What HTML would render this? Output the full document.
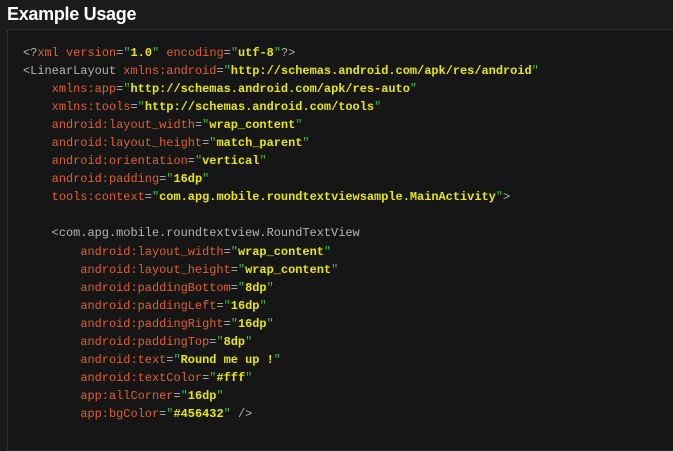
<!DOCTYPE html>
<html><head><style>
html,body{margin:0;padding:0;background:#1b1b1b;width:673px;height:436px;overflow:hidden}
h2{position:absolute;left:7px;top:4px;margin:0;font:bold 18px "Liberation Sans",sans-serif;color:#fff;letter-spacing:-0.3px}
.box{position:absolute;left:7px;top:29px;width:700px;height:420px;background:#161616;border:1px solid #2e2e2e}
pre{position:absolute;left:23px;top:44px;margin:0;font:11.95px/18.05px "Liberation Mono",monospace;color:#b4b4b4}
.a{color:#e0602a}.q{color:#3cbf3c}.v{color:#e8e800;font-weight:bold}
</style></head><body>
<h2>Example Usage</h2>
<div class="box"></div>
<pre>&lt;?<span class="a">xml</span> <span class="a">version</span>=<span class="q">"</span><span class="v">1.0</span><span class="q">"</span> <span class="a">encoding</span>=<span class="q">"</span><span class="v">utf-8</span><span class="q">"</span>?&gt;
&lt;LinearLayout <span class="a">xmlns:android</span>=<span class="q">"</span><span class="v">http://schemas.android.com/apk/res/android</span><span class="q">"</span>
    <span class="a">xmlns:app</span>=<span class="q">"</span><span class="v">http://schemas.android.com/apk/res-auto</span><span class="q">"</span>
    <span class="a">xmlns:tools</span>=<span class="q">"</span><span class="v">http://schemas.android.com/tools</span><span class="q">"</span>
    <span class="a">android:layout_width</span>=<span class="q">"</span><span class="v">wrap_content</span><span class="q">"</span>
    <span class="a">android:layout_height</span>=<span class="q">"</span><span class="v">match_parent</span><span class="q">"</span>
    <span class="a">android:orientation</span>=<span class="q">"</span><span class="v">vertical</span><span class="q">"</span>
    <span class="a">android:padding</span>=<span class="q">"</span><span class="v">16dp</span><span class="q">"</span>
    <span class="a">tools:context</span>=<span class="q">"</span><span class="v">com.apg.mobile.roundtextviewsample.MainActivity</span><span class="q">"</span>&gt;

    &lt;com.apg.mobile.roundtextview.RoundTextView
        <span class="a">android:layout_width</span>=<span class="q">"</span><span class="v">wrap_content</span><span class="q">"</span>
        <span class="a">android:layout_height</span>=<span class="q">"</span><span class="v">wrap_content</span><span class="q">"</span>
        <span class="a">android:paddingBottom</span>=<span class="q">"</span><span class="v">8dp</span><span class="q">"</span>
        <span class="a">android:paddingLeft</span>=<span class="q">"</span><span class="v">16dp</span><span class="q">"</span>
        <span class="a">android:paddingRight</span>=<span class="q">"</span><span class="v">16dp</span><span class="q">"</span>
        <span class="a">android:paddingTop</span>=<span class="q">"</span><span class="v">8dp</span><span class="q">"</span>
        <span class="a">android:text</span>=<span class="q">"</span><span class="v">Round me up !</span><span class="q">"</span>
        <span class="a">android:textColor</span>=<span class="q">"</span><span class="v">#fff</span><span class="q">"</span>
        <span class="a">app:allCorner</span>=<span class="q">"</span><span class="v">16dp</span><span class="q">"</span>
        <span class="a">app:bgColor</span>=<span class="q">"</span><span class="v">#456432</span><span class="q">"</span> /&gt;
</pre>
</body></html>
